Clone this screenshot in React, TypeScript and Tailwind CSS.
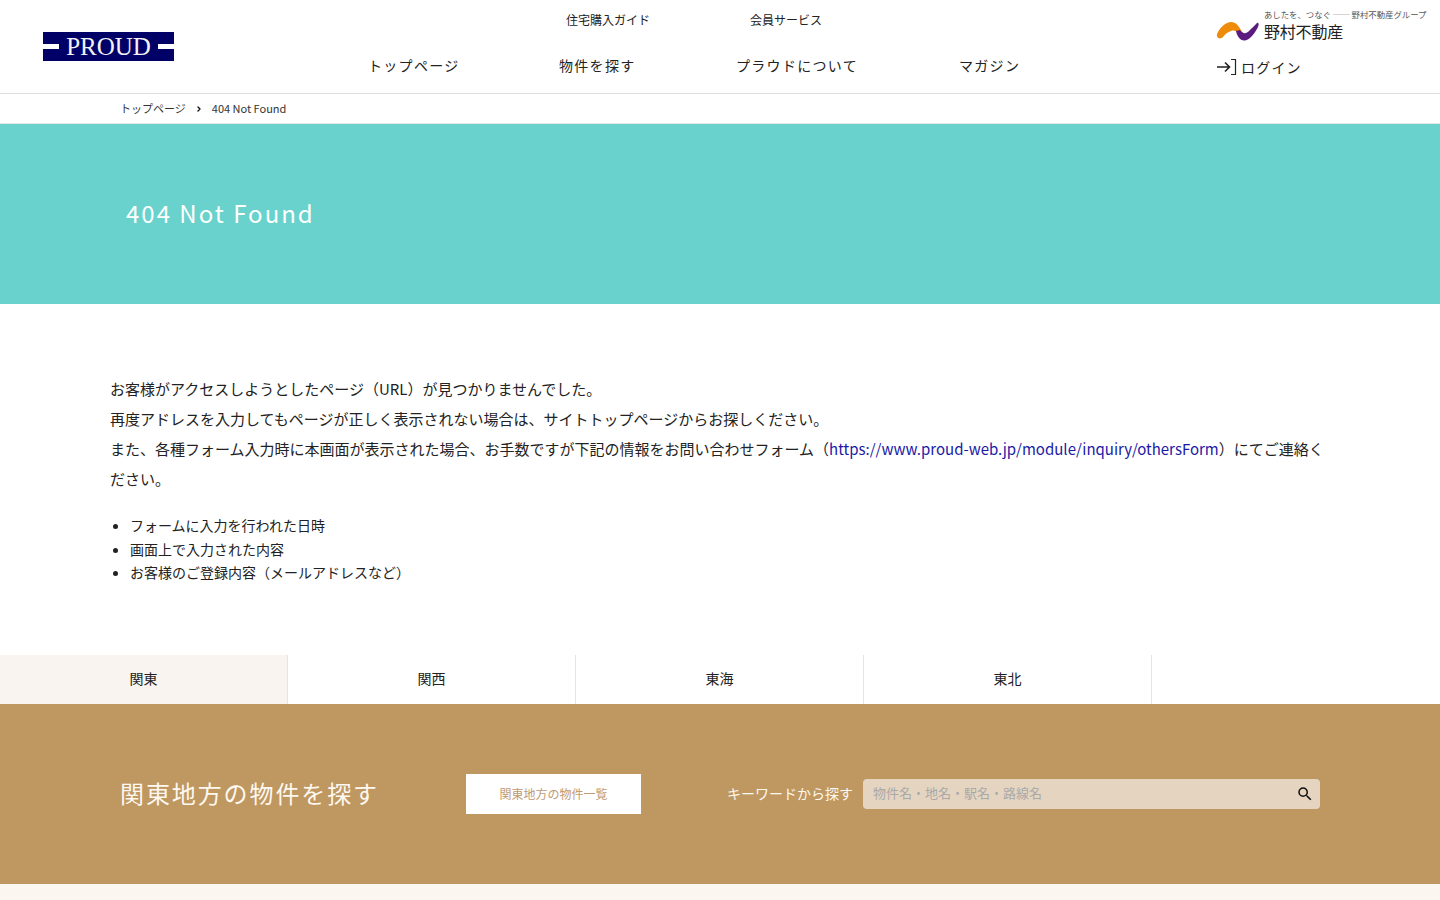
import { ChevronRight } from "lucide-react";
import { MdSearch } from "react-icons/md";

const font = { fontFamily: '"Noto Sans CJK JP", "Noto Sans", sans-serif' };

const mainNav = ["トップページ", "物件を探す", "プラウドについて", "マガジン"];
const subNav = ["住宅購入ガイド", "会員サービス"];
const tabs = ["関東", "関西", "東海", "東北"];
const bullets = [
  "フォームに入力を行われた日時",
  "画面上で入力された内容",
  "お客様のご登録内容（メールアドレスなど）",
];

function ProudLogo() {
  return (
    <div className="flex h-[29px] w-[131px] items-center justify-between bg-[#000066]">
      <span className="h-[5px] w-[16px] bg-white" />
      <span className="text-[25px] leading-none text-[#f2f2f8] [font-family:'Liberation_Serif',serif]">
        PROUD
      </span>
      <span className="h-[5px] w-[16px] bg-white" />
    </div>
  );
}

function NomuraMark() {
  return (
    <svg width="42" height="19" viewBox="0 0 42 19" className="shrink-0">
      <path
        d="M0 12C3 5 9 0 14 0C19 0 22 4 25 10L21 11C19 9 17 8 14 9C11 10 8 12 6 15C3 18-1 16 0 12Z"
        fill="#ee8c0a"
      />
      <path
        d="M19 9L23 8C26 12 29 12 32 9C35 6 38 3 40 1C42 0 42 3 41 5C38 11 33 18 28 18.500C23 19 20 14 19 9Z"
        fill="#5b1a80"
      />
    </svg>
  );
}

function LoginIcon() {
  return (
    <svg width="20" height="18" viewBox="0 0 20 18" fill="none" stroke="#222" strokeWidth="1.6" className="shrink-0">
      <path d="M0 9h12M8 4.500 12.500 9 8 13.500" />
      <path d="M14 1.500h4.500v15H14" strokeWidth="1.200" />
    </svg>
  );
}

export default function App() {
  return (
    <div style={font} className="h-[900px] overflow-hidden bg-white text-[#222]">
      <header className="flex h-[94px] border-b border-[#dddddd]">
        <div className="w-[368px] pl-[43px] pt-[32px]">
          <ProudLogo />
        </div>
        <div className="w-[848px]">
          <div className="flex h-[40px] items-center gap-[100px] pl-[198px] text-[12px]">
            {subNav.map((s) => (
              <span key={s}>{s}</span>
            ))}
          </div>
          <nav className="mt-[2px] flex text-[14px] leading-[46px] tracking-[1.3px]">
            <span className="w-[191px]">{mainNav[0]}</span>
            <span className="w-[177px]">{mainNav[1]}</span>
            <span className="w-[223px]">{mainNav[2]}</span>
            <span>{mainNav[3]}</span>
          </nav>
        </div>
        <div className="flex-1 pl-[1px]">
          <div className="pl-[47px] pt-[7px] text-[8.4px] leading-[14px] text-[#555]">
            あしたを、つなぐ ── 野村不動産グループ
          </div>
          <div className="flex h-[21px] items-center gap-[5px] text-[16px] leading-[20px]">
            <NomuraMark />
            <span className="mb-[1px] tracking-[-0.2px]">野村不動産</span>
          </div>
          <div className="mt-[13px] flex items-center gap-[4px] text-[14px] leading-[24px] tracking-[1.2px]">
            <LoginIcon />
            <span>ログイン</span>
          </div>
        </div>
      </header>

      <div className="flex h-[30px] items-center border-b border-[#e5e5e5] pl-[120px] text-[11px] text-[#333]">
        <span>トップページ</span>
        <ChevronRight size={8} strokeWidth={4} className="mx-[9px] text-[#111]" />
        <span>404 Not Found</span>
      </div>

      <section className="flex h-[180px] items-center bg-[#69d2cc] pb-[2px] pl-[126px]">
        <h1 className="text-[24px] tracking-[2px] text-white">404 Not Found</h1>
      </section>

      <main className="h-[351px] px-[110px] pt-[70px] text-[15px]">
        <div className="leading-[30px]">
          <p>お客様がアクセスしようとしたページ（URL）が見つかりませんでした。</p>
          <p>再度アドレスを入力してもページが正しく表示されない場合は、サイトトップページからお探しください。</p>
          <p>
            また、各種フォーム入力時に本画面が表示された場合、お手数ですが下記の情報をお問い合わせフォーム（
            <a className="text-[#1a1aa6]">https://www.proud-web.jp/module/inquiry/othersForm</a>
            ）にてご連絡ください。
          </p>
        </div>
        <ul className="mt-[20px] list-disc pl-[20px] text-[14px] leading-[23.6px]">
          {bullets.map((b) => (
            <li key={b}>{b}</li>
          ))}
        </ul>
      </main>

      <div className="flex h-[49px]">
        {tabs.map((t, i) => (
          <div
            key={t}
            className={`flex w-[288px] items-center justify-center border-r border-[#e5e5e5] pb-[2px] text-[14px] ${i === 0 ? "bg-[#f9f4f0]" : "bg-white"}`}
          >
            {t}
          </div>
        ))}
      </div>

      <section className="flex h-[180px] items-center bg-[#bf9760] pl-[120px]">
        <h2 className="mb-[2px] w-[346px] text-[24px] tracking-[1.9px] text-[#fdf8f0]">関東地方の物件を探す</h2>
        <a className="flex h-[40px] w-[175px] items-center justify-center bg-white text-[12px] text-[#c09a74]">
          関東地方の物件一覧
        </a>
        <span className="mb-[2px] ml-[86px] text-[14px] text-[#fdf8f0]">キーワードから探す</span>
        <div className="ml-[10px] flex h-[30px] w-[457px] items-center justify-between rounded-[4px] bg-[#e5d5c0] pl-[10px] pr-[6px] text-[13px] text-[#a9a9a9]">
          <span className="mb-[2px]">物件名・地名・駅名・路線名</span>
          <MdSearch size={18} className="text-[#111]" />
        </div>
      </section>

      <div className="h-[16px] bg-[#fbf6f0]" />
    </div>
  );
}
